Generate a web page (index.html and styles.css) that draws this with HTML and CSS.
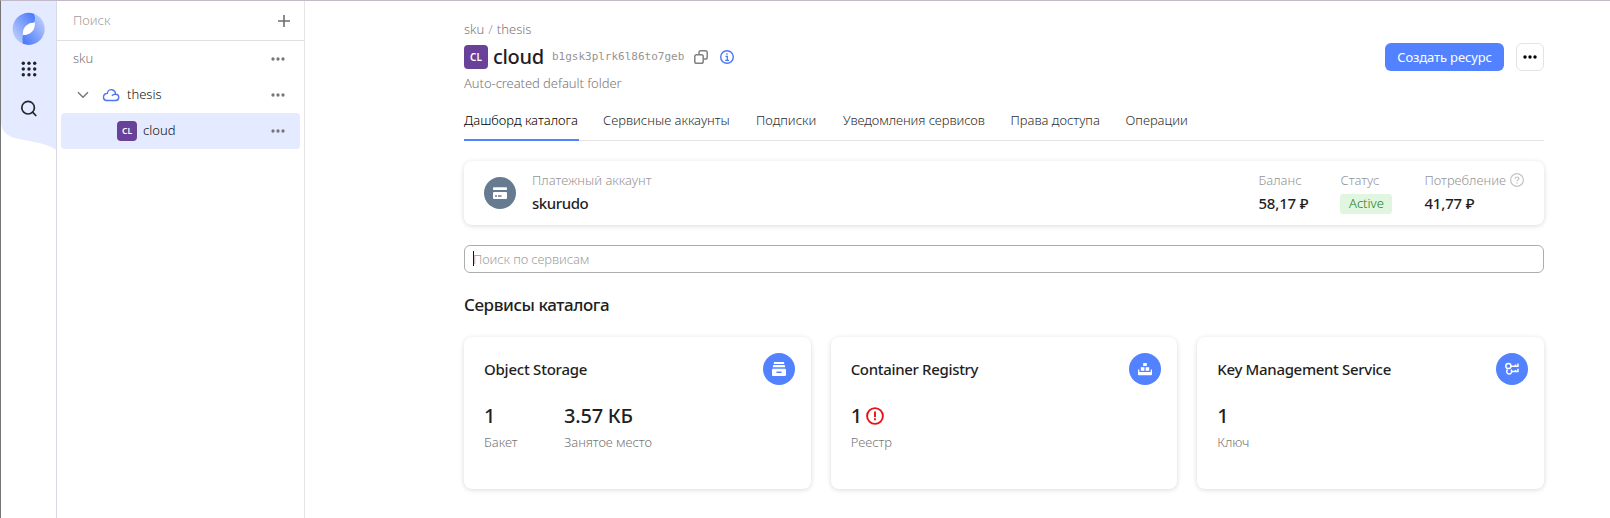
FILE: index.html
```html
<!DOCTYPE html>
<html lang="ru">
<head>
<meta charset="utf-8">
<title>cloud</title>
<link rel="stylesheet" href="styles.css">
</head>
<body>
<div class="app">
  <aside class="rail">
    <svg width="56" height="517" viewBox="1 1 56 517" fill="none">
      <defs>
        <linearGradient id="ga" x1="14" y1="34" x2="35" y2="18" gradientUnits="userSpaceOnUse"><stop offset="0" stop-color="#b3c6fc"/><stop offset="1" stop-color="#4e7dfb"/></linearGradient>
        <linearGradient id="gb" x1="44" y1="24" x2="23" y2="40" gradientUnits="userSpaceOnUse"><stop offset="0" stop-color="#b3c6fc"/><stop offset="1" stop-color="#4e7dfb"/></linearGradient>
      </defs>
      <path d="M1 1H57V150.500C51 146.500 45 144.200 38 142.800L17 138.600C7 136.500 1 131 1 121Z" fill="#e4eaff"/>
      <path d="M34.500 14A16 16 0 1 0 22.800 43.800L22.900 35C22.800 27 27 23 34.800 22.400Q35.500 18 34.500 14Z" fill="url(#ga)"/>
      <path d="M34.500 14A16 16 0 0 1 22.800 43.800Q22 39 22.900 35C31 34.400 35 30.500 34.800 22.400Q35.500 18 34.500 14Z" fill="url(#gb)"/>
      <path d="M22.900 35C22.800 27 27 23 34.800 22.400C35 30.500 31 34.400 22.900 35Z" fill="#fff"/>
      <g fill="#222327"><circle cx="23.300" cy="63.300" r="1.700"/><circle cx="29" cy="63.300" r="1.700"/><circle cx="34.700" cy="63.300" r="1.700"/><circle cx="23.300" cy="69" r="1.700"/><circle cx="29" cy="69" r="1.700"/><circle cx="34.700" cy="69" r="1.700"/><circle cx="23.300" cy="74.700" r="1.700"/><circle cx="29" cy="74.700" r="1.700"/><circle cx="34.700" cy="74.700" r="1.700"/></g>
      <g stroke="#26272b" stroke-width="1.700"><circle cx="28.100" cy="107.700" r="6.300"/><path d="M32.600 112.200L36.300 116"/></g>
    </svg>
  </aside>

  <nav class="tree">
    <div class="tree-search"><span>Поиск</span><svg width="12" height="12" stroke="#6f6f6f" stroke-width="1.600"><path d="M6 0V12M0 6H12"/></svg></div>
    <div class="row root"><span class="name">sku</span><svg class="dots" width="14" height="4"><circle cx="2" cy="2" r="1.650"/><circle cx="7" cy="2" r="1.650"/><circle cx="12" cy="2" r="1.650"/></svg></div>
    <div class="row second">
      <svg class="chev" width="12" height="8" fill="none" stroke="#777" stroke-width="1.400"><path d="M1 1.200L6 6.300L11 1.200"/></svg>
      <svg class="cloud" width="18" height="14" viewBox="0 0 18 14" fill="none" stroke="#4b78f0" stroke-width="1.400" stroke-linejoin="round" stroke-linecap="round"><path d="M4.300 12.500H13.700A3.100 3.100 0 0 0 13.500 6.200A4.100 4.100 0 0 0 5.300 5.400A3.600 3.600 0 0 0 4.300 12.500ZM13.500 6.200Q11.300 6 10.300 7.400"/></svg>
      <span class="name">thesis</span><svg class="dots" width="14" height="4"><circle cx="2" cy="2" r="1.650"/><circle cx="7" cy="2" r="1.650"/><circle cx="12" cy="2" r="1.650"/></svg>
    </div>
    <div class="row third selected">
      <i class="cl small">CL</i><span class="name">cloud</span><svg class="dots" width="14" height="4"><circle cx="2" cy="2" r="1.650"/><circle cx="7" cy="2" r="1.650"/><circle cx="12" cy="2" r="1.650"/></svg>
    </div>
  </nav>

  <main class="content">
    <div class="crumbs"><span>sku</span><span class="sep">/</span><span>thesis</span></div>
    <header class="head">
      <i class="cl">CL</i>
      <h1>cloud</h1>
      <code>b1gsk3plrk6l86to7geb</code>
      <svg class="copy" width="14" height="14" fill="none" stroke="#808080" stroke-width="1.500"><rect x=".8" y="4.800" width="8.400" height="8.400" rx="1.800"/><path d="M5 4.500V2.600Q5 .8 6.800 .8H11.400Q13.200 .8 13.200 2.600V7.200Q13.200 9 11.400 9H9.500"/></svg>
      <svg width="14" height="14" fill="none" stroke="#4b78f5" stroke-width="1.400"><circle cx="7" cy="7" r="6.300"/><path d="M5.500 6.300H7.300V10.300M5.300 10.300H9M7 3.200V4.800" stroke-width="1.300"/></svg>
      <div class="actions">
        <button class="primary">Создать ресурс</button>
        <button class="more"><svg width="14" height="4"><circle cx="2" cy="2" r="1.700"/><circle cx="7" cy="2" r="1.700"/><circle cx="12" cy="2" r="1.700"/></svg></button>
      </div>
    </header>
    <p class="desc">Auto-created default folder</p>

    <div class="tabs">
      <a class="active" style="width:115px">Дашборд каталога</a>
      <a style="width:129px">Сервисные аккаунты</a>
      <a style="width:63px">Подписки</a>
      <a class="t1" style="width:143.500px">Уведомления сервисов</a>
      <a style="width:91px">Права доступа</a>
      <a>Операции</a>
    </div>

    <section class="billing">
      <svg width="32" height="32"><circle cx="16" cy="16" r="16" fill="#677b90"/><g fill="#fff"><rect x="9" y="10.300" width="14" height="2.700" rx=".8"/><rect x="9" y="15" width="14" height="7" rx="1"/></g><path d="M11 19H13M14 19H17.500" stroke="#677b90" stroke-width="1.300"/></svg>
      <div class="acc"><div class="lbl">Платежный аккаунт</div><div class="val t4">skurudo</div></div>
      <div class="stats">
        <div style="width:82px"><div class="lbl">Баланс</div><div class="val">58,17 ₽</div></div>
        <div style="width:84px"><div class="lbl">Статус</div><span class="badge">Active</span></div>
        <div><div class="lbl help">Потребление<svg width="14" height="14" fill="none" stroke="#c4c4c4" stroke-width="1.200"><circle cx="7" cy="7" r="6.400"/><path d="M5.100 5.700Q5.100 4 7 4T8.900 5.600Q8.900 6.500 7.900 7T7 8.300M7 9.400V10.700"/></svg></div><div class="val">41,77 ₽</div></div>
      </div>
    </section>

    <div class="search"><i class="caret"></i>Поиск по сервисам</div>

    <h2>Сервисы каталога</h2>
    <div class="cards">
      <article class="card">
        <div class="card-head"><h3 class="t3">Object Storage</h3><svg width="32" height="32"><circle cx="16" cy="16" r="16" fill="#5282ff"/><g fill="#fff"><path d="M11 9H21L21.300 11H10.700Z"/><path d="M10.300 12H21.700L22.200 14.200H9.800Z" /><path d="M9.700 14.900H22.300L23 16.500V22Q23 23 22 23H10Q9 23 9 22V16.500Z"/></g><path d="M9 15.600H23" stroke="#5282ff" stroke-width=".8"/><path d="M14 19.300H18" stroke="#5282ff" stroke-width="1.500" stroke-linecap="round"/></svg></div>
        <div class="nums"><div><b>1</b><span>Бакет</span></div><div><b class="t3">3.57 КБ</b><span class="t1">Занятое место</span></div></div>
      </article>
      <article class="card">
        <div class="card-head"><h3 class="t4">Container Registry</h3><svg width="32" height="32"><circle cx="16" cy="16" r="16" fill="#5282ff"/><g fill="#fff"><rect x="14.200" y="10" width="3.600" height="3"/><rect x="11.800" y="14.200" width="3.600" height="3.600"/><rect x="16.600" y="14.200" width="3.600" height="3.600"/><path d="M9 16.500H10.300V19H21.700V16.500H23V21.300Q23 22.300 22 22.300H10Q9 22.300 9 21.300Z"/></g></svg></div>
        <div class="nums"><div><b>1<svg width="18" height="18" fill="none" stroke="#e81212" stroke-width="1.900"><circle cx="9" cy="9" r="7.900"/><path d="M9 4.600V9.900M9 11.200V13.200"/></svg></b><span>Реестр</span></div></div>
      </article>
      <article class="card">
        <div class="card-head"><h3 class="t4">Key Management Service</h3><svg width="32" height="32" fill="none"><circle cx="16" cy="16" r="16" fill="#5282ff"/><g stroke="#fff" stroke-width="1.500"><circle cx="12.400" cy="13" r="2.600"/><path d="M15 13.200H22.600M22 13.200V10.400M19.500 13.200V11.500M15.800 18.600H22.600M22 18.600V15.800M19.500 18.600V17"/><path d="M11.600 16.600A2.500 2.500 0 1 0 15 16.700"/></g></svg></div>
        <div class="nums"><div><b>1</b><span class="t1">Ключ</span></div></div>
      </article>
    </div>
  </main>
</div>
</body>
</html>
```
FILE: styles.css
```css
* { box-sizing: border-box; }
body { margin: 0; background: #fff; color: #1f1f1f; font: 300 13px/20px "Noto Sans", "Open Sans", sans-serif; overflow: hidden; }
h1, h2, h3, p { margin: 0; font-weight: 500; }
svg { display: block; flex: none; }
i { font-style: normal; }
.t1 { letter-spacing: -.08px; }
.t3 { letter-spacing: -.23px; }
.t4 { letter-spacing: -.33px; }

.app { display: flex; height: 518px; border-top: 1px solid #c3bac8; border-left: 1px solid #757575; }
.rail { width: 56px; border-right: 1px solid #d9dbe4; overflow: hidden; flex: none; }
.tree { width: 248px; border-right: 1px solid #e5e5e5; flex: none; }
.tree-search { display: flex; justify-content: space-between; align-items: center; height: 40px; padding: 0 14px 0 16px; border-bottom: 1px solid #e0e0e0; color: #a0a0a0; }
.tree-search span { margin-bottom: 1px; }
.row { display: flex; align-items: center; height: 36px; margin: 0 4px; border-radius: 4px; padding-right: 15px; color: #111; }
.row .name { flex: 1; padding-bottom: 2px; }
.dots { fill: #777; }
.root { padding-left: 12px; color: #777; }
.second { padding-left: 16px; }
.cloud { margin: 0 7px 0 13px; }
.third { padding-left: 56px; }
.selected { background: #e4eaff; }
.cl { display: flex; align-items: center; justify-content: center; width: 24px; height: 24px; border-radius: 4px; background: #6a4199; color: #fff; font-size: 10px; font-weight: 600; flex: none; }
.cl.small { width: 20px; height: 20px; font-size: 8.5px; margin-right: 6px; }

.content { width: 1080px; margin-left: 159px; padding-top: 18px; }
.crumbs { display: flex; gap: 4px; color: #777; }
.crumbs .sep { color: #999; }
.head { display: flex; align-items: center; height: 24px; margin-top: 6px; }
h1 { margin-left: 5px; font-size: 20px; line-height: 24px; letter-spacing: -.3px; padding-bottom: 1px; }
code { margin: 0 10px 0 8px; font: 11px/20px "DejaVu Sans Mono", monospace; color: #949494; }
.copy { margin-right: 12px; }
.actions { display: flex; gap: 12px; margin-left: auto; }
button { height: 28px; padding: 0 0 1px; border: 0; border-radius: 6px; font: 13px/20px "Noto Sans", sans-serif; }
.primary { width: 119px; background: #5282ff; color: #fff; letter-spacing: -.12px; }
.more { display: flex; align-items: center; justify-content: center; width: 28px; padding: 0; background: #fff; border: 1px solid #e3e3e3; }
.desc { margin-top: 4px; font-weight: 300; color: #777; letter-spacing: -.06px; }
.tabs { display: flex; gap: 24px; height: 31px; margin-top: 17px; box-shadow: inset 0 -1px #e3e3e3; color: #2e2e2e; white-space: nowrap; }
.tabs .active { border-bottom: 2px solid #5282ff; color: #000; }

.billing, .card { border-radius: 8px; background: #fff; box-shadow: 0 1px 5px rgba(0, 0, 0, .15); }
.billing { display: flex; height: 64px; margin-top: 20px; padding: 9px 20px 0; }
.billing > svg { margin-top: 7px; }
.acc { margin-left: 16px; }
.lbl { color: #959595; white-space: nowrap; }
.val { margin-top: 3px; font-size: 15px; font-weight: 500; letter-spacing: -.17px; }
.val.t4 { letter-spacing: -.42px; }
.stats { display: flex; margin-left: auto; }
.help { display: flex; align-items: center; gap: 4px; }
.badge { display: inline-block; width: 52px; height: 20px; margin-top: 4px; border-radius: 3px; background: #e0f6e1; color: #227d20; text-align: center; line-height: 19px; }
.search { display: flex; align-items: center; height: 28px; margin-top: 20px; padding: 0 0 1px 8px; border: 1px solid #adadad; border-radius: 6px; color: #a0a0a0; letter-spacing: -.1px; }
.caret { width: 1px; height: 15px; margin-right: -1px; background: #111; }
h2 { margin-top: 20px; font-size: 17px; line-height: 24px; letter-spacing: -.42px; }
.cards { display: grid; grid-template-columns: repeat(3, 1fr); gap: 20px; margin-top: 20px; }
.card { height: 152px; padding: 16px 16px 0 20px; }
.card-head { display: flex; justify-content: space-between; align-items: center; height: 32px; }
h3 { font-size: 15px; line-height: 20px; padding-bottom: 1px; }
.nums { display: flex; gap: 20px; margin-top: 17px; }
.nums div { min-width: 60px; }
.nums b { display: flex; align-items: center; gap: 4px; height: 28px; font-size: 20px; font-weight: 500; }
.nums span { display: block; margin-top: 3px; line-height: 18px; color: #777; }
```
